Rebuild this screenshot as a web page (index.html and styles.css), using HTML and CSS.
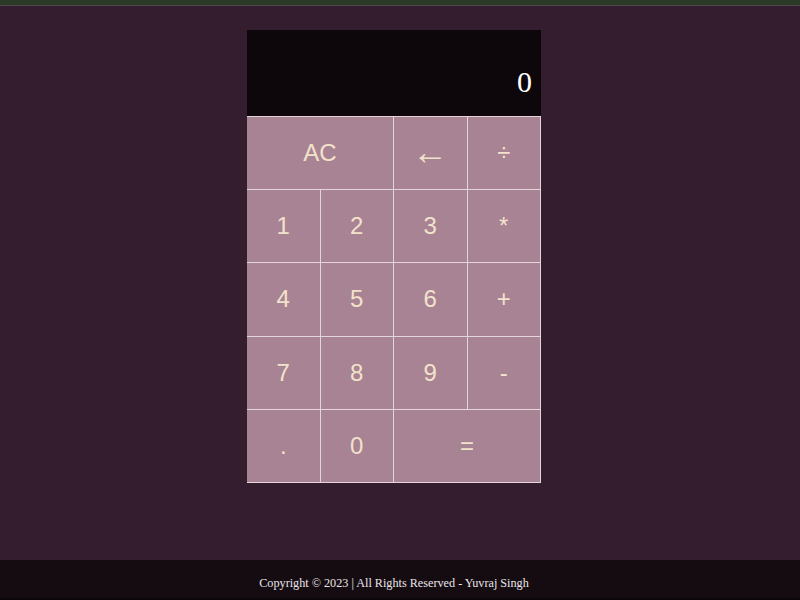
FILE: index.html
```html
<!DOCTYPE html>
<html lang="en">
<head>
<meta charset="utf-8">
<title>Calculator</title>
<link rel="stylesheet" href="styles.css">
</head>
<body>
<div class="topbar"></div>
<main class="main">
  <div class="calculator">
    <div class="display">0</div>
    <div class="keys">
      <button class="key span2">AC</button>
      <button class="key arrow">←</button>
      <button class="key">÷</button>
      <button class="key">1</button>
      <button class="key">2</button>
      <button class="key">3</button>
      <button class="key">*</button>
      <button class="key">4</button>
      <button class="key">5</button>
      <button class="key">6</button>
      <button class="key">+</button>
      <button class="key">7</button>
      <button class="key">8</button>
      <button class="key">9</button>
      <button class="key">-</button>
      <button class="key">.</button>
      <button class="key">0</button>
      <button class="key span2">=</button>
    </div>
  </div>
</main>
<footer class="footer">Copyright © 2023 | All Rights Reserved - Yuvraj Singh</footer>
</body>
</html>
```
FILE: styles.css
```css
* { box-sizing: border-box; }
html, body { margin: 0; padding: 0; }
body {
  height: 600px;
  background: #331d2e;
  display: flex;
  flex-direction: column;
  overflow: hidden;
}
.topbar {
  height: 6px;
  background: #2c3a28;
  border-bottom: 1px solid #4a4848;
  flex: none;
}
.main {
  flex: 1;
  display: flex;
  justify-content: center;
  padding-top: 24px;
  padding-right: 12px;
}
.calculator {
  width: 294px;
  height: 453px;
  display: flex;
  flex-direction: column;
}
.display {
  height: 86px;
  background: #0d070b;
  color: #ffffff;
  font-family: "Liberation Serif", "Times New Roman", serif;
  font-size: 30px;
  text-align: right;
  padding: 34px 9px 0 0;
  line-height: 36px;
}
.keys {
  flex: 1;
  display: grid;
  grid-template-columns: repeat(4, 1fr);
  grid-template-rows: repeat(5, 1fr);
  gap: 1px;
  padding: 1px 1px 1px 0;
  background: #e3d5db;
}
.key {
  border: none;
  margin: 0;
  padding: 0;
  background: #a78394;
  color: #f3e2cb;
  font-family: "Liberation Sans", Arial, sans-serif;
  font-size: 24px;
  line-height: 1;
  cursor: pointer;
}
.arrow {
  font-size: 36px;
  padding-bottom: 3px;
}
.span2 { grid-column: span 2; }
.footer {
  flex: none;
  height: 40px;
  background: #150c12;
  border-bottom: 2px solid #0c070a;
  color: #ece4e8;
  font-family: "Liberation Serif", serif;
  font-size: 12.2px;
  text-align: center;
  line-height: 46px;
  padding-right: 12px;
}
```
